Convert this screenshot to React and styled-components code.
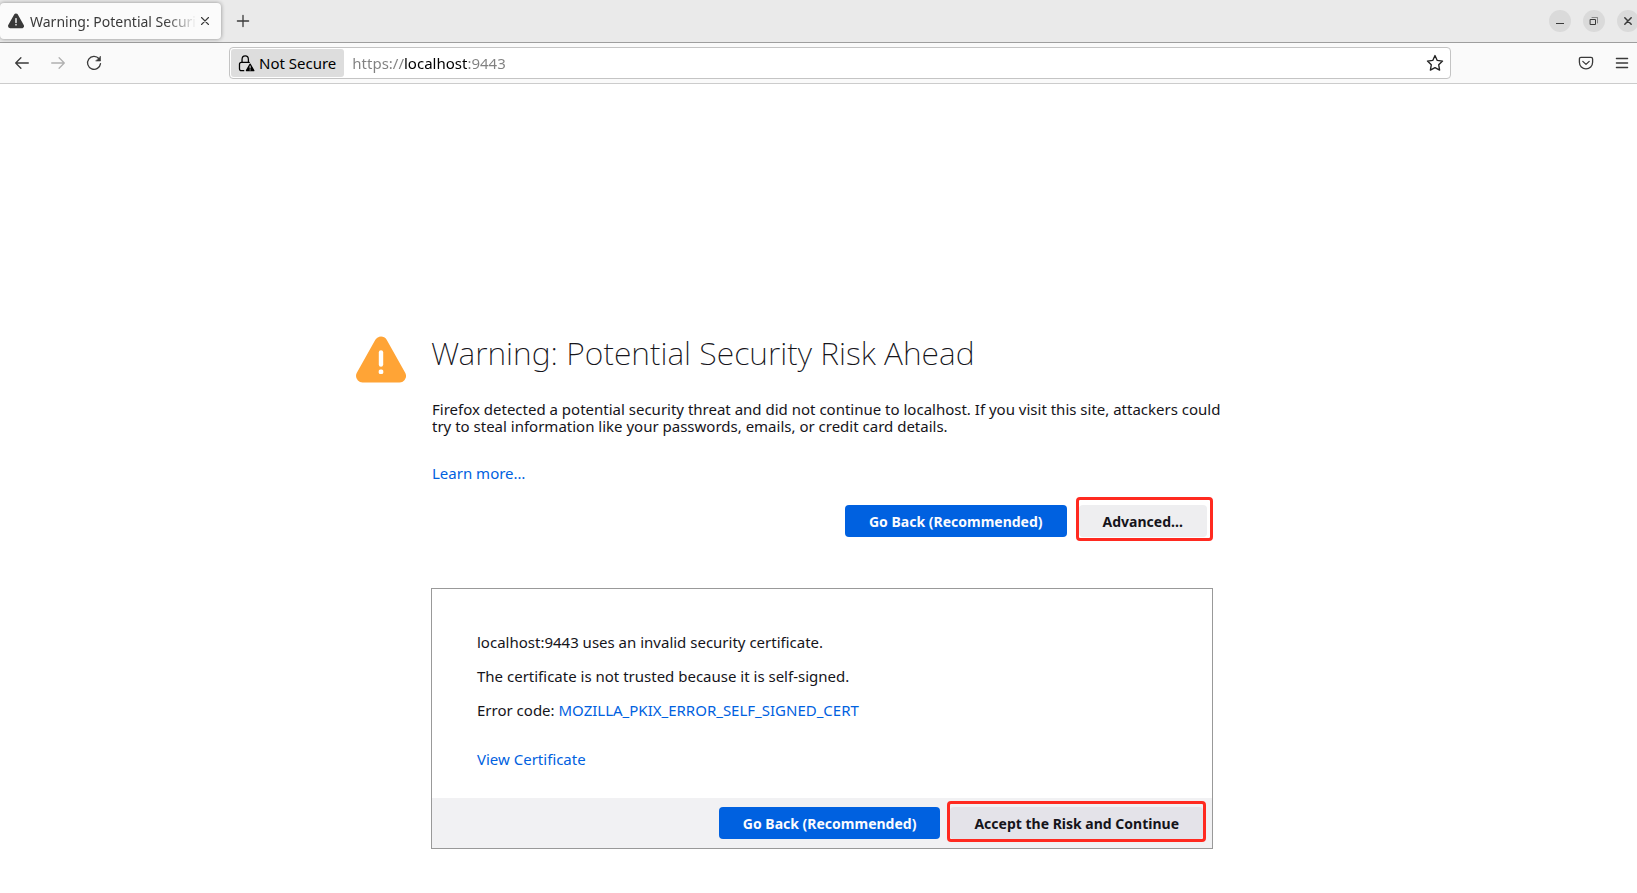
import React from 'react';
import styled, { createGlobalStyle } from 'styled-components';

const App = () => {
    return (
        <>
            <GlobalStyle />
            <TabBar>
                <Tab>
                    <WarningIcon size={16} color="#3a3a3a" mark="#fbfbfb" />
                    <TabTitle>Warning: Potential Security Risk Ahead</TabTitle>
                    <CloseTab aria-label="Close tab"><CrossIcon /></CloseTab>
                </Tab>
                <ToolButton aria-label="New tab"><PlusIcon /></ToolButton>
                <WindowButtons>
                    <WindowButton aria-label="Minimize"><MinimizeIcon /></WindowButton>
                    <WindowButton aria-label="Restore"><RestoreIcon /></WindowButton>
                    <WindowButton aria-label="Close"><WindowCloseIcon /></WindowButton>
                </WindowButtons>
            </TabBar>
            <Toolbar>
                <ToolGroup>
                    <ToolButton aria-label="Back"><BackIcon /></ToolButton>
                    <ToolButton aria-label="Forward" disabled><ForwardIcon /></ToolButton>
                    <ToolButton aria-label="Reload"><ReloadIcon /></ToolButton>
                </ToolGroup>
                <Spacer />
                <UrlBar>
                    <Identity><LockIcon />Not Secure</Identity>
                    <UrlInput aria-label="Address" defaultValue="https://localhost:9443" />
                    <StarButton aria-label="Bookmark this page"><StarIcon /></StarButton>
                </UrlBar>
                <Spacer />
                <ToolGroup>
                    <ToolButton aria-label="Save to Pocket"><PocketIcon /></ToolButton>
                    <ToolButton aria-label="Menu"><MenuIcon /></ToolButton>
                </ToolGroup>
            </Toolbar>
            <Page>
                <IconColumn>
                    <WarningIcon size={50} color="#ffa436" mark="#fff" />
                </IconColumn>
                <Content>
                    <Title>Warning: Potential Security Risk Ahead</Title>
                    <Message>
                        Firefox detected a potential security threat and did not continue to localhost. If you visit this site, attackers could try to steal information like your passwords, emails, or credit card details.
                    </Message>
                    <TextLink href="#learn">Learn more…</TextLink>
                    <Actions>
                        <Button $primary>Go Back (Recommended)</Button>
                        <Highlight>
                            <Button>Advanced…</Button>
                        </Highlight>
                    </Actions>
                    <Panel>
                        <PanelBody>
                            <p>localhost:9443 uses an invalid security certificate.</p>
                            <p>The certificate is not trusted because it is self-signed.</p>
                            <p>Error code: <TextLink href="#code">MOZILLA_PKIX_ERROR_SELF_SIGNED_CERT</TextLink></p>
                            <Certificate>
                                <TextLink href="#certificate">View Certificate</TextLink>
                            </Certificate>
                        </PanelBody>
                        <PanelActions>
                            <Button $primary>Go Back (Recommended)</Button>
                            <Highlight $tight>
                                <Button $dark>Accept the Risk and Continue</Button>
                            </Highlight>
                        </PanelActions>
                    </Panel>
                </Content>
            </Page>
        </>
    );
};

const WarningIcon = ({ size, color, mark }) => (
    <svg width={size} height={size} viewBox="0 0 50 50" aria-hidden="true">
        <path d="M25 8 L43.5 41 H6.5 Z" fill={color} stroke={color} strokeWidth="13" strokeLinejoin="round" />
        <path d="M25 17.5 V29.5" stroke={mark} strokeWidth="4.4" strokeLinecap="round" />
        <rect x="22.7" y="34.5" width="4.6" height="4.6" rx="1.6" fill={mark} />
    </svg>
);

const Line = ({ size = 16, width = 1.3, children }) => (
    <svg width={size} height={size} viewBox="0 0 16 16" fill="none" stroke="currentColor" strokeWidth={width} strokeLinecap="round" strokeLinejoin="round" aria-hidden="true">
        {children}
    </svg>
);

const CrossIcon = () => <Line width={1.1}><path d="M4.5 4.5 L11.5 11.5 M11.5 4.5 L4.5 11.5" /></Line>;
const PlusIcon = () => <Line><path d="M8 2.4 V13.6 M2.4 8 H13.6" /></Line>;
const BackIcon = () => <Line><path d="M14.3 8 H1.8 M6.9 2.8 L1.7 8 L6.9 13.2" /></Line>;
const ForwardIcon = () => <Line><path d="M1.7 8 H14.2 M9.1 2.8 L14.3 8 L9.1 13.2" /></Line>;
const MenuIcon = () => <Line><path d="M2.4 3.5 H13.6 M2.4 8 H13.6 M2.4 12.5 H13.6" /></Line>;

const ReloadIcon = () => (
    <Line>
        <path d="M13 3.6 A6.5 6.5 0 1 0 14.5 8.6" />
        <path d="M14.5 1.5 V6 H10 Z" fill="currentColor" strokeWidth="0.6" />
    </Line>
);

const PocketIcon = () => (
    <Line>
        <path d="M3 2.3 H13 C14 2.3 14.6 2.9 14.6 3.9 V7.2 C14.6 11 11.7 13.8 8 13.8 C4.3 13.8 1.4 11 1.4 7.2 V3.9 C1.4 2.9 2 2.3 3 2.3 Z" />
        <path d="M4.8 6.4 L8 9.4 L11.2 6.4" />
    </Line>
);

const StarIcon = () => (
    <Line size={18} width={1.2}>
        <path d="M8 1.4 L10 5.7 L14.7 6.3 L11.3 9.6 L12.1 14.3 L8 12.1 L3.9 14.3 L4.7 9.6 L1.3 6.3 L6 5.7 Z" />
    </Line>
);

const LockIcon = () => (
    <Line size={17} width={1.2}>
        <path d="M3.8 7 V4.4 C3.8 2.2 5 0.9 6.8 0.9 C8.6 0.9 9.8 2.2 9.8 4.4 V7" />
        <path d="M5.4 14.8 H3.2 C2.1 14.8 1.4 14.1 1.4 13 V8.8 C1.4 7.7 2.1 7 3.2 7 H10.6" />
        <path d="M11.4 8.6 L14.9 14.7 H7.9 Z" fill="currentColor" />
        <path d="M11.4 10.4 V12.3 M11.4 13.9 V14" stroke="#ddd" strokeWidth="1" />
    </Line>
);

const MinimizeIcon = () => <Line width={1}><path d="M4 10.5 H12" strokeLinecap="butt" /></Line>;
const WindowCloseIcon = () => <Line width={1.5}><path d="M4.8 4.8 L11.2 11.2 M11.2 4.8 L4.8 11.2" /></Line>;
const RestoreIcon = () => (
    <Line width={1}>
        <path d="M6 4.5 H11.5 V10" opacity="0.5" />
        <path d="M4.5 6.5 H9.5 V11.5 H4.5 Z" />
    </Line>
);

const GlobalStyle = createGlobalStyle`
  * {
    box-sizing: border-box;
  }
  body {
    margin: 0;
    background: #fff;
    color: #15141a;
    font-family: 'Noto Sans', 'Open Sans', sans-serif;
    font-size: 15px;
    line-height: 17px;
  }
  button, input {
    font: inherit;
    color: inherit;
    border: 0;
    padding: 0;
    background: none;
  }
  svg {
    display: block;
    flex: none;
  }
`;

const TabBar = styled.div`
    display: flex;
    align-items: center;
    height: 43px;
    background: #eaeaea;
    border-bottom: 1px solid #9e9e9e;
    color: #3a3a3a;
`;

const Tab = styled.div`
    display: flex;
    align-items: center;
    width: 221px;
    height: 36px;
    padding: 0 8px;
    background: #fbfbfb;
    border-radius: 4px;
    box-shadow: 0 0 4px rgba(0, 0, 0, 0.4);
`;

const TabTitle = styled.span`
    flex: 1;
    min-width: 0;
    margin-left: 6px;
    padding-top: 1px;
    overflow: hidden;
    font-size: 14px;
    line-height: 20px;
    white-space: nowrap;
    mask-image: linear-gradient(to left, transparent, #000 32px);
`;

const CloseTab = styled.button`
    flex: none;
`;

const ToolButton = styled.button`
    display: flex;
    align-items: center;
    justify-content: center;
    width: 36px;
    height: 32px;
    color: #3a3a3a;

    &:disabled {
        color: #b0b0b0;
    }
    ${TabBar} & {
        margin-left: 4px;
    }
`;

const WindowButtons = styled.div`
    display: flex;
    gap: 12px;
    margin-left: auto;
    margin-right: -2px;
`;

const WindowButton = styled.button`
    display: flex;
    align-items: center;
    justify-content: center;
    width: 22px;
    height: 22px;
    border-radius: 50%;
    background: #dadada;
`;

const Toolbar = styled.div`
    display: flex;
    align-items: center;
    height: 41px;
    margin-right: -3px;
    padding: 0 0 0 4px;
    background: #fafafa;
    border-bottom: 1px solid #ccc;
`;

const ToolGroup = styled.div`
    display: flex;
`;

const Spacer = styled.div`
    flex: 0 1 117px;
`;

const UrlBar = styled.div`
    display: flex;
    align-items: center;
    flex: 1;
    height: 32px;
    padding: 0 6px 0 1px;
    background: #fff;
    border: 1px solid #c4c4c4;
    border-radius: 4px;
`;

const Identity = styled.button`
    display: flex;
    align-items: center;
    gap: 4px;
    height: 28px;
    padding: 0 8px 0 7px;
    background: #ddd;
    border-radius: 3px;
    color: #000;
    white-space: nowrap;
`;

/* the host name is darker than the scheme and the port */
const UrlInput = styled.input`
    flex: 1;
    min-width: 0;
    margin-left: 8px;
    height: 28px;
    background: linear-gradient(to right, #808080 52px, #000 52px, #000 115px, #808080 115px);
    background-clip: text;
    -webkit-text-fill-color: transparent;
    outline: none;
`;

const StarButton = styled.button`
    color: #222;
`;

const Page = styled.main`
    display: grid;
    grid-template-columns: 1fr minmax(0, 782px) 1fr;
    padding: 251px 0 44px 7px;
`;

const IconColumn = styled.div`
    display: flex;
    justify-content: flex-end;
    align-items: flex-start;
    padding-right: 25px;
`;

const Content = styled.div`
    display: flex;
    flex-direction: column;
    align-items: stretch;
`;

const Title = styled.h1`
    margin: 0;
    font-size: 32px;
    line-height: 36px;
    font-weight: 200;
`;

const Message = styled.p`
    margin: 30px -8px 30px 0;
    padding-left: 1px;
`;

const TextLink = styled.a`
    color: #0061e0;
    text-decoration: none;

    ${Content} > & {
        align-self: flex-start;
        padding-left: 1px;
    }
`;

const Actions = styled.div`
    display: flex;
    justify-content: flex-end;
    align-items: baseline;
    gap: 9px;
    margin-top: 15px;
`;

const Button = styled.button`
    height: 32px;
    padding: 0 24px;
    border-radius: 4px;
    background: ${props => (props.$primary ? '#0061e0' : props.$dark ? '#e4e3e9' : '#eeeef0')};
    color: ${props => (props.$primary ? '#fbfbfe' : '#15141a')};
    font-size: 14px;
    font-weight: 700;
    white-space: nowrap;
`;

const Highlight = styled.div`
    display: flex;
    padding: ${props => (props.$tight ? '3px 0 0' : '5px 3px 1px 0')};
    border: 3px solid #ff2a20;
    border-radius: 4px;
`;

const Panel = styled.section`
    margin-top: 47px;
    border: 1px solid #999;
`;

const PanelBody = styled.div`
    padding: 45px 45px 30px;

    p {
        margin: 0 0 17px;
    }
`;

const Certificate = styled.div`
    margin-top: 32px;
`;

const PanelActions = styled.div`
    display: flex;
    justify-content: flex-end;
    align-items: baseline;
    gap: 7px;
    padding: 3px 6px 6px;
    background: #f1f1f3;
`;

export default App;
